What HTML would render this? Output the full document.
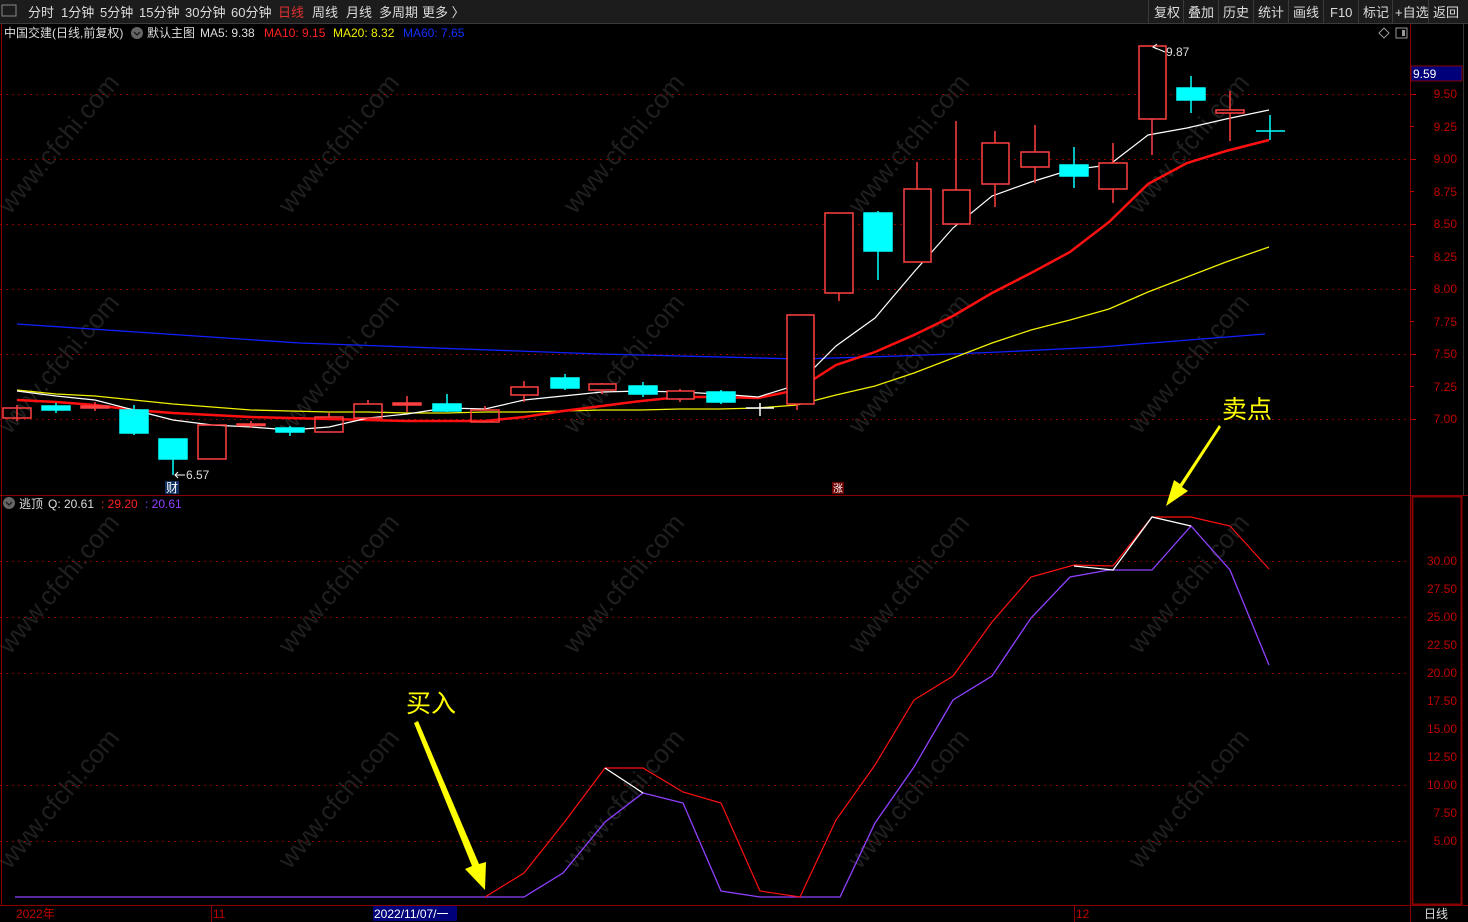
<!DOCTYPE html>
<html><head><meta charset="utf-8"><style>
html,body{margin:0;padding:0;background:#000;width:1468px;height:922px;overflow:hidden}
body{font-family:"Liberation Sans","Noto Sans CJK SC",sans-serif}
svg{display:block}
</style></head><body>
<svg width="1468" height="922" xmlns="http://www.w3.org/2000/svg" font-family="Liberation Sans, Noto Sans CJK SC, sans-serif">
<rect width="1468" height="922" fill="#000"/>
<rect x="0" y="0" width="1468" height="23" fill="#1c1c1c"/>
<line x1="0" y1="23.5" x2="1468" y2="23.5" stroke="#3a3a3a"/>
<rect x="2" y="5" width="14" height="11" fill="none" stroke="#888" stroke-width="1"/>
<g font-size="13" fill="#ddd">
<text x="28" y="17">分时</text><text x="61" y="17">1分钟</text><text x="100" y="17">5分钟</text><text x="139" y="17">15分钟</text><text x="185" y="17">30分钟</text><text x="231" y="17">60分钟</text>
<text x="278" y="17" fill="#e03030">日线</text><text x="312" y="17">周线</text><text x="346" y="17">月线</text><text x="379" y="17">多周期</text><text x="422" y="17">更多 〉</text>
</g>
<g stroke="#3a3a3a"><line x1="1148.5" y1="0" x2="1148.5" y2="23"/><line x1="1183.5" y1="0" x2="1183.5" y2="23"/><line x1="1218.5" y1="0" x2="1218.5" y2="23"/><line x1="1253.5" y1="0" x2="1253.5" y2="23"/><line x1="1288.5" y1="0" x2="1288.5" y2="23"/><line x1="1323.5" y1="0" x2="1323.5" y2="23"/><line x1="1358.5" y1="0" x2="1358.5" y2="23"/><line x1="1392.5" y1="0" x2="1392.5" y2="23"/><line x1="1428.5" y1="0" x2="1428.5" y2="23"/></g>
<g font-size="13" fill="#ddd">
<text x="1154" y="17">复权</text><text x="1188" y="17">叠加</text><text x="1223" y="17">历史</text><text x="1258" y="17">统计</text><text x="1293" y="17">画线</text><text x="1330" y="17">F10</text><text x="1363" y="17">标记</text><text x="1395" y="17">+自选</text><text x="1433" y="17">返回</text>
</g>
<g font-size="12">
<text x="4" y="37" fill="#ddd">中国交建(日线,前复权)</text>
<circle cx="137" cy="33" r="6" fill="#666"/><path d="M134 32 l3 3 l3 -3" stroke="#222" fill="none" stroke-width="1.5"/>
<text x="147" y="37" fill="#ddd">默认主图</text>
<text x="200" y="37" fill="#ddd">MA5: 9.38</text>
<text x="264" y="37" fill="#ff2020">MA10: 9.15</text>
<text x="333" y="37" fill="#f0f000">MA20: 8.32</text>
<text x="403" y="37" fill="#1030ff">MA60: 7.65</text>
</g>
<path d="M1384 28 l5 5 l-5 5 l-5 -5z" fill="none" stroke="#999"/>
<rect x="1396" y="28" width="11" height="10" fill="none" stroke="#999"/><rect x="1402" y="30" width="3" height="6" fill="#999"/>
<g font-size="26" fill="#1f1f1f" font-family="Liberation Sans, sans-serif">
<text transform="translate(10,215) rotate(-50)">www.cfchi.com</text>
<text transform="translate(290,215) rotate(-50)">www.cfchi.com</text>
<text transform="translate(575,215) rotate(-50)">www.cfchi.com</text>
<text transform="translate(860,215) rotate(-50)">www.cfchi.com</text>
<text transform="translate(1140,215) rotate(-50)">www.cfchi.com</text>
<text transform="translate(10,435) rotate(-50)">www.cfchi.com</text>
<text transform="translate(290,435) rotate(-50)">www.cfchi.com</text>
<text transform="translate(575,435) rotate(-50)">www.cfchi.com</text>
<text transform="translate(860,435) rotate(-50)">www.cfchi.com</text>
<text transform="translate(1140,435) rotate(-50)">www.cfchi.com</text>
<text transform="translate(10,655) rotate(-50)">www.cfchi.com</text>
<text transform="translate(290,655) rotate(-50)">www.cfchi.com</text>
<text transform="translate(575,655) rotate(-50)">www.cfchi.com</text>
<text transform="translate(860,655) rotate(-50)">www.cfchi.com</text>
<text transform="translate(1140,655) rotate(-50)">www.cfchi.com</text>
<text transform="translate(10,870) rotate(-50)">www.cfchi.com</text>
<text transform="translate(290,870) rotate(-50)">www.cfchi.com</text>
<text transform="translate(575,870) rotate(-50)">www.cfchi.com</text>
<text transform="translate(860,870) rotate(-50)">www.cfchi.com</text>
<text transform="translate(1140,870) rotate(-50)">www.cfchi.com</text>
</g>
<g stroke="#8a0000" stroke-dasharray="2,4">
<line x1="0" y1="94.5" x2="1410" y2="94.5"/><line x1="0" y1="159.5" x2="1410" y2="159.5"/><line x1="0" y1="224.5" x2="1410" y2="224.5"/><line x1="0" y1="289.5" x2="1410" y2="289.5"/><line x1="0" y1="354.5" x2="1410" y2="354.5"/><line x1="0" y1="419.5" x2="1410" y2="419.5"/>
<line x1="0" y1="561.5" x2="1410" y2="561.5"/><line x1="0" y1="617.5" x2="1410" y2="617.5"/><line x1="0" y1="673.5" x2="1410" y2="673.5"/><line x1="0" y1="785.5" x2="1410" y2="785.5"/><line x1="0" y1="841.5" x2="1410" y2="841.5"/>
</g>
<g stroke="#8a0000" fill="none">
<line x1="1410.5" y1="24" x2="1410.5" y2="922"/>
<line x1="0" y1="495.5" x2="1468" y2="495.5"/>
<line x1="0" y1="905.5" x2="1468" y2="905.5"/>
<line x1="1.5" y1="24" x2="1.5" y2="905"/>
<rect x="1412.5" y="496.5" width="49" height="408" stroke-width="2"/>
</g>
<line x1="1463.5" y1="24" x2="1463.5" y2="495" stroke="#333"/>
<g font-size="12" fill="#c00000" text-anchor="end">
<text x="1457" y="98">9.50</text><text x="1457" y="131">9.25</text><text x="1457" y="163">9.00</text><text x="1457" y="196">8.75</text><text x="1457" y="228">8.50</text><text x="1457" y="261">8.25</text><text x="1457" y="293">8.00</text><text x="1457" y="326">7.75</text><text x="1457" y="358">7.50</text><text x="1457" y="391">7.25</text><text x="1457" y="423">7.00</text>
<text x="1457" y="565">30.00</text><text x="1457" y="593">27.50</text><text x="1457" y="621">25.00</text><text x="1457" y="649">22.50</text><text x="1457" y="677">20.00</text><text x="1457" y="705">17.50</text><text x="1457" y="733">15.00</text><text x="1457" y="761">12.50</text><text x="1457" y="789">10.00</text><text x="1457" y="817">7.50</text><text x="1457" y="845">5.00</text>
</g>
<g stroke="#c00000"><line x1="1411" y1="94.5" x2="1416" y2="94.5"/><line x1="1411" y1="126.5" x2="1414" y2="126.5"/><line x1="1411" y1="159.5" x2="1416" y2="159.5"/><line x1="1411" y1="191.5" x2="1414" y2="191.5"/><line x1="1411" y1="224.5" x2="1416" y2="224.5"/><line x1="1411" y1="256.5" x2="1414" y2="256.5"/><line x1="1411" y1="289.5" x2="1416" y2="289.5"/><line x1="1411" y1="321.5" x2="1414" y2="321.5"/><line x1="1411" y1="354.5" x2="1416" y2="354.5"/><line x1="1411" y1="386.5" x2="1414" y2="386.5"/><line x1="1411" y1="419.5" x2="1416" y2="419.5"/></g>
<rect x="1411" y="66" width="51" height="15" fill="#00007a" stroke="#8a0000"/>
<text x="1413" y="78" font-size="12" fill="#fff">9.59</text>
<polyline fill="none" stroke="#1020ff" stroke-width="1.3" points="17,324 300,343 600,354 800,359 900,356 1000,352 1100,347 1265,334"/>
<polyline fill="none" stroke="#f0f000" stroke-width="1.3" points="17,390 56,394 95,396 134,400 173,404 212,407 251,410 290,411 329,412 368,412 407,413 446,413 485,412 524,412 563,411 602,410 641,410 680,409 719,409 758,408 797,405 836,395 875,386 914,373 953,358 992,343 1031,330 1070,320 1109,309 1148,292 1187,277 1226,262 1269,247"/>
<polyline fill="none" stroke="#ff1010" stroke-width="2.5" points="17,400 56,402 95,405 134,410 173,413 212,415 251,417 290,418 329,419 368,420 407,421 446,421 485,421 524,417 563,411 602,406 641,401 680,397 719,397 758,398 797,390 836,365 875,352 914,335 953,316 992,293 1031,273 1070,252 1109,222 1148,184 1187,163 1226,151 1269,140"/>
<polyline fill="none" stroke="#fff" stroke-width="1.2" points="17,391 56,396 95,400 134,410 173,420 212,425 251,427 290,430 329,427 368,418 407,414 446,408 485,409 524,400 563,396 602,392 641,391 680,392 719,394 758,397 797,385 836,346 875,318 914,272 953,228 992,196 1031,182 1070,170 1109,165 1148,135 1187,128 1226,119 1269,110"/>
<g stroke="#ff4040" stroke-width="1.5" fill="none">
<line x1="17" y1="405" x2="17" y2="421"/><rect x="3" y="408" width="28" height="10"/>
<line x1="95" y1="402" x2="95" y2="411"/><rect x="81" y="406" width="28" height="2" fill="#ff4040"/>
<rect x="198" y="425" width="28" height="34"/>
<line x1="251" y1="421" x2="251" y2="428"/><rect x="237" y="424" width="28" height="1.5" fill="#ff4040"/>
<line x1="329" y1="413" x2="329" y2="417"/><rect x="315" y="417" width="28" height="15"/>
<line x1="368" y1="400" x2="368" y2="404"/><rect x="354" y="404" width="28" height="14"/>
<line x1="407" y1="396" x2="407" y2="412"/><rect x="393" y="403" width="28" height="2" fill="#ff4040"/>
<line x1="485" y1="406" x2="485" y2="410"/><rect x="471" y="410" width="28" height="12"/>
<line x1="524" y1="381" x2="524" y2="402"/><rect x="511" y="387" width="27" height="8" fill="#000"/>
<line x1="602" y1="383" x2="602" y2="394"/><rect x="589" y="384" width="27" height="6" fill="#000"/>
<line x1="680" y1="389" x2="680" y2="402"/><rect x="667" y="391" width="27" height="8" fill="#000"/>
<line x1="797" y1="404" x2="797" y2="410"/><rect x="787" y="315" width="27" height="89" fill="#000"/>
<line x1="839" y1="293" x2="839" y2="301"/><rect x="825" y="213" width="28" height="80" fill="#000"/>
<line x1="917" y1="162" x2="917" y2="189"/><rect x="904" y="189" width="27" height="73" fill="#000"/>
<line x1="956" y1="121" x2="956" y2="190"/><rect x="943" y="190" width="27" height="34" fill="#000"/>
<line x1="995" y1="131" x2="995" y2="207"/><rect x="982" y="143" width="27" height="41" fill="#000"/>
<line x1="1035" y1="125" x2="1035" y2="183"/><rect x="1021" y="152" width="28" height="15" fill="#000"/>
<line x1="1113" y1="143" x2="1113" y2="203"/><rect x="1099" y="163" width="28" height="26" fill="#000"/>
<line x1="1152" y1="119" x2="1152" y2="155"/><rect x="1139" y="46" width="27" height="73" fill="#000"/>
<line x1="1230" y1="91" x2="1230" y2="141"/><rect x="1216" y="110" width="28" height="3" fill="#000"/>
</g>
<g fill="#00ffff" stroke="#00ffff" stroke-width="1.5">
<rect x="42" y="406" width="28" height="4"/><line x1="56" y1="403" x2="56" y2="413"/>
<line x1="134" y1="405" x2="134" y2="435"/><rect x="120" y="410" width="28" height="23"/>
<line x1="173" y1="459" x2="173" y2="475"/><rect x="159" y="439" width="28" height="20"/>
<line x1="290" y1="426" x2="290" y2="436"/><rect x="276" y="428" width="28" height="4"/>
<line x1="447" y1="394" x2="447" y2="412"/><rect x="433" y="404" width="28" height="7"/>
<line x1="565" y1="374" x2="565" y2="390"/><rect x="551" y="378" width="28" height="10"/>
<line x1="643" y1="382" x2="643" y2="397"/><rect x="629" y="386" width="28" height="8"/>
<line x1="721" y1="390" x2="721" y2="404"/><rect x="707" y="392" width="28" height="10"/>
<line x1="878" y1="211" x2="878" y2="280"/><rect x="864" y="213" width="28" height="38"/>
<line x1="1074" y1="147" x2="1074" y2="188"/><rect x="1060" y="165" width="28" height="11"/>
<line x1="1191" y1="76" x2="1191" y2="113"/><rect x="1177" y="88" width="28" height="12"/>
<line x1="1270" y1="115" x2="1270" y2="140"/><line x1="1256" y1="131" x2="1285" y2="131"/>
</g>
<g stroke="#fff" stroke-width="1.5"><line x1="760" y1="403" x2="760" y2="416"/><line x1="746" y1="408" x2="774" y2="408"/></g>
<text x="1166" y="56" font-size="12" fill="#ddd">9.87</text>
<path d="M1153 47 l12 5" stroke="#fff" fill="none"/><path d="M1157 44 l-4 3 l4 2" stroke="#fff" fill="none"/>
<text x="186" y="479" font-size="12" fill="#ddd">6.57</text>
<path d="M175 475 h10 M178 472 l-3 3 l3 3" stroke="#fff" fill="none"/>
<rect x="165" y="481" width="14" height="13" fill="#103060"/>
<text x="166" y="492" font-size="12" fill="#fff">财</text>
<rect x="832" y="482" width="12" height="12" fill="#6a0000"/>
<text x="833" y="492" font-size="10" fill="#fff">涨</text>
<circle cx="9" cy="503" r="6" fill="#666"/><path d="M6 502 l3 3 l3 -3" stroke="#222" fill="none" stroke-width="1.5"/>
<g font-size="12"><text x="19" y="508" fill="#ddd">逃顶</text><text x="48" y="508" fill="#ddd">Q: 20.61</text><text x="101" y="508" fill="#ff2020">: 29.20</text><text x="145" y="508" fill="#9040ff">: 20.61</text></g>
<polyline fill="none" stroke="#9040ff" stroke-width="1.3" points="15,897 524,897 563,873 605,822 643,793 683,803 721,891 760,897 840,897 875,823 914,767 953,700 992,676 1031,618 1070,577 1109,570 1152,570 1191,526 1230,570 1269,665"/>
<polyline fill="none" stroke="#ff1010" stroke-width="1.2" points="485,897 524,873 563,824 605,768 643,768 683,792 721,803 760,891 800,897 836,820 875,765 914,700 953,676 992,622 1031,577 1074,565 1113,566 1152,517 1191,517 1230,526 1269,569"/>
<g stroke="#fff" stroke-width="1.3" fill="none"><polyline points="605,768 643,793"/><polyline points="1074,566 1113,570 1152,517 1191,526"/></g>
<g fill="#ffff00">
<path d="M414 723 L472 866 L465 869 L485 890 L486 862 L479 864 L418 721 Z"/>
<path d="M1219 425 L1180 484 L1174 480 L1166 506 L1188 491 L1182 487 L1221 427 Z"/>
</g>
<text x="406" y="712" font-size="25" fill="#ffff00">买入</text>
<text x="1222" y="418" font-size="25" fill="#ffff00">卖点</text>
<g stroke="#8a0000"><line x1="211.5" y1="906" x2="211.5" y2="922"/><line x1="1074.5" y1="906" x2="1074.5" y2="922"/></g>
<g font-size="12" fill="#c00000"><text x="16" y="918">2022年</text><text x="213" y="918">11</text><text x="1076" y="918">12</text></g>
<rect x="373" y="906" width="84" height="15" fill="#00007a"/>
<text x="374" y="918" font-size="12" fill="#fff">2022/11/07/一</text>
<text x="1424" y="918" font-size="12" fill="#ddd">日线</text>
</svg>
</body></html>
